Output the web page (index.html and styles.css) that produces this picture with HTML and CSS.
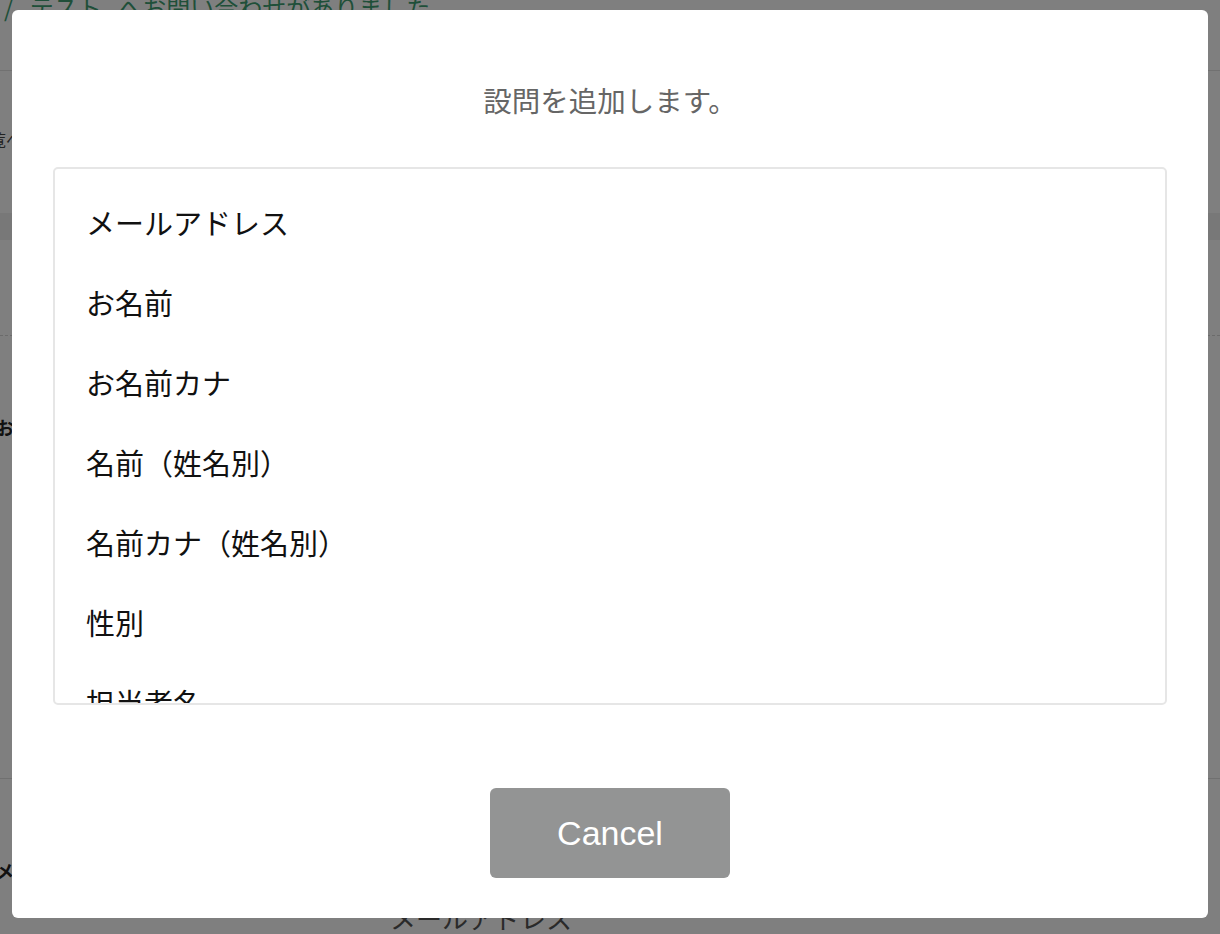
FILE: index.html
```html
<!DOCTYPE html>
<html lang="ja">
<head>
<meta charset="utf-8">
<title>設問を追加</title>
<link rel="stylesheet" href="styles.css">
</head>
<body>
<div class="page">
  <header class="page-header">
    <h1 class="page-title">/ テスト へお問い合わせがありました</h1>
  </header>
  <div class="page-nav"><span class="back-link">一覧へ ‹</span></div>
  <div class="page-band"></div>
  <div class="page-section"></div>
  <div class="page-section tall"><span class="field-label">お名前</span></div>
  <div class="page-section last">
    <span class="field-label">メールアドレス</span>
    <span class="field-value">メールアドレス</span>
  </div>
</div>

<div class="overlay">
  <div class="modal">
    <p class="modal-title">設問を追加します。</p>
    <ul class="choice-list">
      <li class="choice">メールアドレス</li>
      <li class="choice">お名前</li>
      <li class="choice">お名前カナ</li>
      <li class="choice">名前（姓名別）</li>
      <li class="choice">名前カナ（姓名別）</li>
      <li class="choice">性別</li>
      <li class="choice">担当者名</li>
      <li class="choice">電話番号</li>
      <li class="choice">住所</li>
    </ul>
    <div class="modal-actions">
      <button class="btn-cancel" type="button">Cancel</button>
    </div>
  </div>
</div>
</body>
</html>
```

FILE: styles.css
```css
* { box-sizing: border-box; }

html, body {
  margin: 0;
  padding: 0;
  height: 934px;
  overflow: hidden;
  background: #fff;
  font-family: "Noto Sans CJK JP", "Noto Sans", sans-serif;
}

/* ---------- background page ---------- */
.page {
  width: 1220px;
}

.page-header {
  display: flow-root;
  height: 71px;
  border-bottom: 1px solid #e2e2e2;
}

.page-title {
  margin: -9px 0 0 4px;
  font-size: 24px;
  line-height: 32px;
  font-weight: 400;
  color: #3f9f72;
  white-space: nowrap;
  word-spacing: 11px;
}

.page-nav {
  height: 142px;
  padding-top: 58px;
  margin-left: -26px;
  font-size: 16px;
  line-height: 20px;
  color: #444;
}

.page-band {
  height: 27px;
  background: #f0f0f0;
}

.page-section {
  height: 96px;
  border-bottom: 1px dashed #d6d6d6;
}

.page-section.tall {
  height: 443px;
  padding-top: 80px;
  border-bottom: 1px solid #e0e0e0;
}

.page-section.last {
  height: 160px;
  padding-top: 80px;
  border-bottom: none;
}

.field-label {
  display: block;
  margin-left: -4px;
  font-size: 18px;
  line-height: 22px;
  font-weight: 700;
  color: #222;
}

.field-value {
  display: block;
  margin: 22px 0 0 390px;
  font-size: 26px;
  line-height: 30px;
  color: #555;
}

/* ---------- overlay + modal ---------- */
.overlay {
  position: fixed;
  inset: 0;
  background: rgba(0, 0, 0, 0.5);
  display: flex;
  justify-content: center;
  align-items: flex-start;
  padding-top: 10px;
}

.modal {
  width: 1196px;
  height: 908px;
  background: #fff;
  border-radius: 6px;
  padding: 40px 41px;
  display: flex;
  flex-direction: column;
}

.modal-title {
  margin: 0;
  padding: 30px 0 47px;
  text-align: center;
  font-size: 28.5px;
  line-height: 40px;
  color: #666;
}

.choice-list {
  list-style: none;
  margin: 0;
  padding: 13px 31px 0;
  height: 538px;
  border: 2px solid #e6e6e6;
  border-radius: 5px;
  overflow-y: auto;
  scrollbar-width: none;
}

.choice {
  height: 80px;
  line-height: 80px;
  font-size: 29px;
  color: #111;
  white-space: nowrap;
}

.modal-actions {
  display: flex;
  justify-content: center;
  margin-top: 83px;
}

.btn-cancel {
  width: 240px;
  height: 90px;
  border: none;
  border-radius: 6px;
  background: #939494;
  color: #fff;
  font-family: "Liberation Sans", Arial, sans-serif;
  font-size: 34px;
  cursor: pointer;
}
```
